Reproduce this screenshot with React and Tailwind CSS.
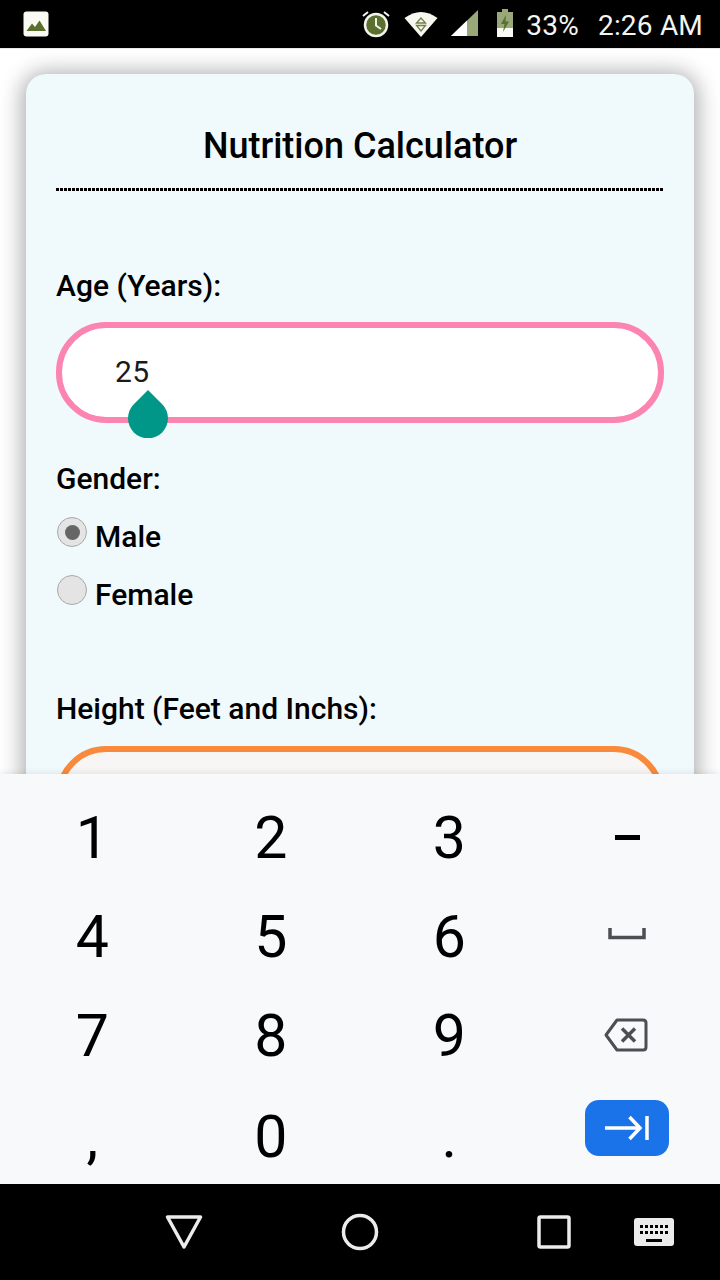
import React from "react";

const keys = ["1", "2", "3", "minus", "4", "5", "6", "space", "7", "8", "9", "back", ",", "0", ".", "next"];

function StatusBar() {
  return (
    <div className="h-[49px] shrink-0 bg-black flex items-center justify-between pl-[23px] pr-[17px] border-b border-[#e8e8e8]">
      <svg width="26" height="26" viewBox="0 0 26 26">
        <rect x="0.5" y="0.5" width="25" height="25" rx="3" fill="#fafaf5" />
        <path d="M3.5 20 L9 12.5 L12 16 L16.5 9.5 L23 20 Z" fill="#5b6f2e" />
      </svg>
      <div className="flex items-center">
        <svg width="30" height="30" viewBox="0 0 30 30" className="mr-[13px]">
          <circle cx="15" cy="16" r="11" fill="#5b6f2e" stroke="#f4f4ec" strokeWidth="2.5" />
          <path d="M15 9 V16.5 L20 20" fill="none" stroke="#f4f4ec" strokeWidth="2" />
          <path d="M2 7 L7 3 M28 7 L23 3" stroke="#f4f4ec" strokeWidth="2" />
        </svg>
        <svg width="34" height="28" viewBox="0 0 34 28" className="mr-[13px]">
          <path d="M0.500 8 Q17 -4 33.500 8 L17 27 Z" fill="#f7f7f0" />
          <path d="M17 8 L12.500 13 H21.500 Z M12.500 15.500 H21.500 L17 21 Z" fill="none" stroke="#6f7f4a" strokeWidth="1.300" />
        </svg>
        <svg width="28" height="28" viewBox="0 0 28 28" className="mr-[17px]">
          <path d="M0 26 L27 0 V26 Z" fill="#98a878" />
          <path d="M0 26 L16 10.500 V26 Z" fill="#ffffff" />
        </svg>
        <svg width="18" height="30" viewBox="0 0 18 30" className="mr-[12px]">
          <path d="M6 0 H12 V3 H17 V19 H1 V3 H6 Z" fill="#98a878" />
          <rect x="1" y="19" width="16" height="9" fill="#fafaf5" />
          <path d="M10 6 L5 15 H8.500 L7 23 L13 12.500 H9.500 Z" fill="#5b6f2e" />
        </svg>
        <span className="mt-[3px] text-[28px] tracking-[0.2px] text-[#f4f4f0] mr-[19px]">33%</span>
        <span className="mt-[3px] text-[28px] tracking-[0.2px] text-[#f4f4f0]">2:26 AM</span>
      </div>
    </div>
  );
}

function Radio({ checked, label }) {
  return (
    <div className="flex h-[58px]">
      <div className="ml-[1px] w-[30px] h-[30px] rounded-full border border-[#a9a9a9] bg-[#e4e4e4] flex items-center justify-center">
        {checked && <div className="w-[15px] h-[15px] rounded-full bg-[#666666]" />}
      </div>
      <span className="ml-[8px] mt-[3px] text-[30px] font-medium leading-[34px] text-black">{label}</span>
    </div>
  );
}

function KeyFace({ k }) {
  if (k === "minus") return <div className="w-[25px] h-[5px] bg-black" />;
  if (k === "space") {
    return (
      <svg width="38" height="12" viewBox="0 0 38 12" className="mb-[5px] mr-[2px]">
        <path d="M2 0 V9.500 H36 V0" fill="none" stroke="#4c4f52" strokeWidth="3.500" />
      </svg>
    );
  }
  if (k === "back") {
    return (
      <svg width="44" height="34" viewBox="0 0 44 34" className="mb-[2px] mr-[3px]">
        <path d="M13 2 H39 Q42 2 42 5 V29 Q42 32 39 32 H13 L2 17 Z" fill="none" stroke="#4c4f52" strokeWidth="3" strokeLinejoin="round" />
        <path d="M18 10.500 L31 23.500 M31 10.500 L18 23.500" stroke="#4c4f52" strokeWidth="3.500" />
      </svg>
    );
  }
  if (k === "next") {
    return (
      <div className="w-[84px] h-[56px] mb-[14px] mr-[1px] rounded-[14px] bg-[#1a73e8] flex items-center justify-center">
        <svg width="44" height="26" viewBox="0 0 44 26">
          <path d="M0 13 H35 M24.500 2 L35 13 L24.500 24" fill="none" stroke="#ffffff" strokeWidth="3.500" />
          <path d="M42 1 V25" stroke="#ffffff" strokeWidth="3.500" />
        </svg>
      </div>
    );
  }
  if (k === "0" || k === "." || k === ",") {
    return <span className="mt-[3px] text-[59px] leading-none text-black">{k}</span>;
  }
  return <span className="text-[59px] leading-none text-black">{k}</span>;
}

export default function App() {
  return (
    <div className="w-[720px] h-[1280px] flex flex-col overflow-hidden bg-white font-['Roboto',sans-serif]">
      <StatusBar />
      <div className="h-[725px] shrink-0 overflow-hidden px-[26px] pt-[25px]">
        <div className="bg-[#f0f9fb] rounded-[20px] shadow-[0_2px_22px_4px_rgba(0,0,0,0.33)] px-[30px] h-[900px]">
          <h1 className="pt-[51px] h-[114px] text-center text-[36px] leading-[42px] font-medium text-black">Nutrition Calculator</h1>
          <div className="h-[3px] bg-[repeating-linear-gradient(90deg,#000_0_3px,transparent_3px_4px)]" />
          <p className="mt-[78px] text-[30px] leading-[34px] font-medium text-black">Age (Years):</p>
          <div className="relative mt-[19px] h-[101px] rounded-[50px] border-[6px] border-[#fb84b1] bg-white pl-[53px] pb-[2px] flex items-center">
            <span className="text-[30px] tracking-[0.5px] text-[#1a1a1a]">25</span>
            <svg width="40" height="48" viewBox="0 0 40 48" className="absolute left-[66px] top-[62px]">
              <path d="M20 0 L34 14 A20 20 0 1 1 6 14 Z" fill="#009688" />
            </svg>
          </div>
          <p className="mt-[39px] text-[30px] leading-[34px] font-medium text-black">Gender:</p>
          <div className="mt-[21px]">
            <Radio checked label="Male" />
            <Radio label="Female" />
          </div>
          <p className="mt-[59px] text-[30px] leading-[34px] font-medium text-black">Height (Feet and Inchs):</p>
          <div className="mt-[20px] h-[101px] rounded-[50px] border-[6px] border-[#f98a3c] bg-[#f8f6f4]" />
        </div>
      </div>
      <div className="h-[410px] shrink-0 bg-[#f7f9fa] shadow-[0_-2px_6px_rgba(0,0,0,0.07)] px-[3px] pt-[14px] grid grid-cols-4 grid-rows-4 relative z-10">
        {keys.map((k) => (
          <div key={k} className="flex items-center justify-center h-[99px]">
            <KeyFace k={k} />
          </div>
        ))}
      </div>
      <div className="flex-1 bg-black flex items-center pl-[165px] relative z-10">
        <svg width="38" height="36" viewBox="0 0 38 36">
          <path d="M2.500 3 H35.500 L19 33 Z" fill="none" stroke="#ececec" strokeWidth="3.500" strokeLinejoin="round" />
        </svg>
        <svg width="38" height="38" viewBox="0 0 38 38" className="ml-[138px]">
          <circle cx="19" cy="19" r="16.500" fill="none" stroke="#ececec" strokeWidth="3.500" />
        </svg>
        <svg width="34" height="34" viewBox="0 0 34 34" className="ml-[158px]">
          <rect x="2" y="2" width="30" height="30" rx="1.500" fill="none" stroke="#ececec" strokeWidth="3.500" />
        </svg>
        <svg width="40" height="28" viewBox="0 0 40 28" className="ml-[63px]">
          <rect width="40" height="28" rx="3" fill="#ececec" />
          <path d="M6 7 h3 v3 h-3 Z M11 7 h3 v3 h-3 Z M16 7 h3 v3 h-3 Z M21 7 h3 v3 h-3 Z M26 7 h3 v3 h-3 Z M31 7 h3 v3 h-3 Z M6 13 h3 v3 h-3 Z M11 13 h3 v3 h-3 Z M16 13 h3 v3 h-3 Z M21 13 h3 v3 h-3 Z M26 13 h3 v3 h-3 Z M31 13 h3 v3 h-3 Z M12 21 h16 v3 h-16 Z" fill="#000000" />
        </svg>
      </div>
    </div>
  );
}
